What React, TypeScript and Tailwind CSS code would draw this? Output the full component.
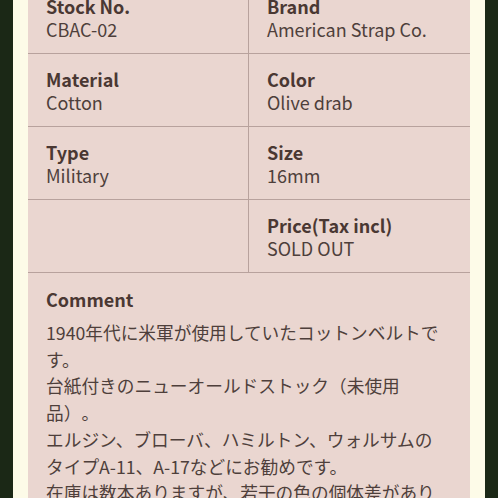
import React from "react";

// ── Spec rows (left / right pairs) ───────────────────────────────────────────
type Cell = { label: string; value: string } | null;

const rows: [Cell, Cell][] = [
  [{ label: "Stock No.", value: "CBAC-02" }, { label: "Brand", value: "American Strap Co." }],
  [{ label: "Material", value: "Cotton" }, { label: "Color", value: "Olive drab" }],
  [{ label: "Type", value: "Military" }, { label: "Size", value: "16mm" }],
  [null, { label: "Price(Tax incl)", value: "SOLD OUT" }],
];

const comment = [
  "1940年代に米軍が使用していたコットンベルトです。",
  "台紙付きのニューオールドストック（未使用品）。",
  "エルジン、ブローバ、ハミルトン、ウォルサムのタイプA-11、A-17などにお勧めです。",
  "在庫は数本ありますが、若干の色の個体差があります。",
];

function SpecCell({ cell, first }: { cell: Cell; first?: boolean }) {
  return (
    <div className={`h-[72px] pl-[18px] pr-3 pt-[14px] ${first ? "border-r border-[#b8a29d]" : ""}`}>
      {cell && (
        <>
          <div className="text-[18px] font-bold leading-[23px] text-[#4a3833]">{cell.label}</div>
          <div className="text-[18px] leading-[23px] text-[#4e3f3b]">{cell.value}</div>
        </>
      )}
    </div>
  );
}

export default function App() {
  return (
    <div
      className="flex h-[498px] w-[498px] overflow-hidden bg-[#1b2816]"
      style={{ fontFamily: '"Noto Sans CJK JP", "Noto Sans", sans-serif' }}
    >
      <div className="ml-[13px] mr-[13px] flex flex-1 bg-[#fdfbe8] px-[15px]">
        <div className="-mt-[19px] flex-1 bg-[#ead6d0]">
          {/* ── Spec grid ─────────────────────────────────────────── */}
          {rows.map(([l, r], i) => (
            <div key={i} className="grid grid-cols-2 border-b border-[#b8a29d]">
              <SpecCell cell={l} first />
              <SpecCell cell={r} />
            </div>
          ))}

          {/* ── Comment ───────────────────────────────────────────── */}
          <div className="pl-[18px] pr-[20px] pt-[15px]">
            <div className="text-[18px] font-bold leading-[23px] text-[#4a3833]">Comment</div>
            <div className="mt-[8px] text-[17.7px] leading-[26.7px] text-[#4e3f3b] [text-spacing-trim:space-all]">
              {comment.map((c) => (
                <p key={c}>{c}</p>
              ))}
            </div>
          </div>
        </div>
      </div>
    </div>
  );
}
